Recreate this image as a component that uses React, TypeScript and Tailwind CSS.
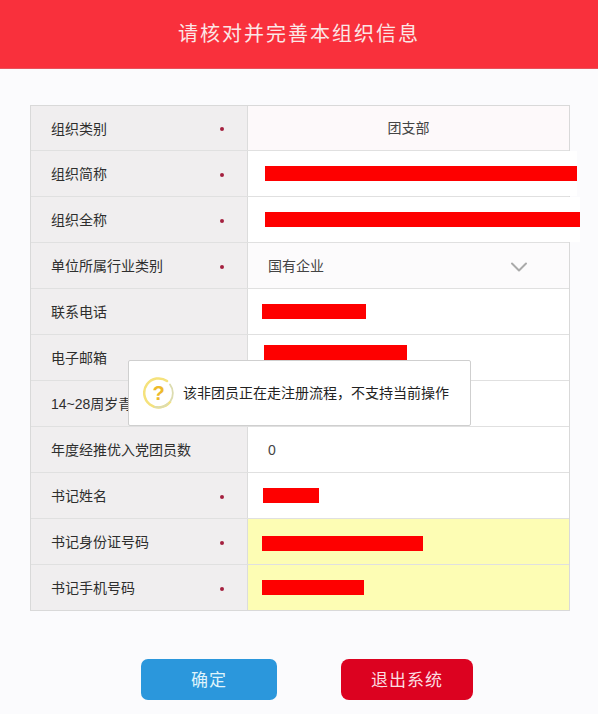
// Organisation info review form with a toast over it
import { ChevronDown } from 'lucide-react';

const FONT = '"Liberation Sans", "Noto Sans CJK SC", sans-serif';

interface Row {
  label: string;
  required?: boolean;
  tint?: 'pink' | 'soft' | 'yellow';
  bar?: { left: number; width: number; shift?: number };
  text?: string;
  select?: boolean;
  center?: boolean;
}

const rows: Row[] = [
  { label: '组织类别', required: true, tint: 'pink', text: '团支部', center: true },
  { label: '组织简称', required: true, bar: { left: 17, width: 312 } },
  { label: '组织全称', required: true, bar: { left: 17, width: 315 } },
  { label: '单位所属行业类别', required: true, tint: 'soft', text: '国有企业', select: true },
  { label: '联系电话', bar: { left: 14, width: 104 } },
  { label: '电子邮箱', bar: { left: 16, width: 143, shift: -10 } },
  { label: '14~28周岁青' },
  { label: '年度经推优入党团员数', text: '0' },
  { label: '书记姓名', required: true, bar: { left: 15, width: 56 } },
  { label: '书记身份证号码', required: true, tint: 'yellow', bar: { left: 14, width: 161, shift: 4 } },
  { label: '书记手机号码', required: true, tint: 'yellow', bar: { left: 14, width: 102, shift: -1 } },
];

function TableRow({ row, index }: { row: Row; index: number }) {
  const last = index === rows.length - 1;
  const tint =
    row.tint === 'yellow'
      ? 'bg-[#fdfdb4]'
      : row.tint === 'pink'
        ? 'bg-[#fdf9fa]'
        : row.tint === 'soft'
          ? 'bg-[#fcfbfc]'
          : 'bg-white';
  return (
    <div className={`flex ${index === 0 || last ? 'h-[45px]' : 'h-[46px]'} ${last ? '' : 'border-b border-[#e0e0e0]'}`}>
      <div className="flex w-[217px] shrink-0 items-center justify-between border-r border-[#dcdcdc] bg-[#f0eeef] pl-[20px] pr-[23px] pt-[2px] text-[14px] text-[#2e2e2e]">
        <span>{row.label}</span>
        {row.required && <span className="size-[4px] rounded-full bg-[#a4203f]" />}
      </div>
      <div className={`flex flex-1 items-center text-[14px] text-[#444] ${tint}`}>
        {row.bar && (
          <div
            className="h-[15px] shrink-0 bg-[#fe0000]"
            style={{ marginLeft: row.bar.left, width: row.bar.width, marginTop: row.bar.shift ?? 0 }}
          />
        )}
        {row.text && !row.bar && (
          <div
            className={
              row.center
                ? 'w-full pt-[1px] text-center'
                : 'flex w-full items-center justify-between pl-[20px] pr-[36px] pt-[2px]'
            }
          >
            <span>{row.text}</span>
            {row.select && (
              <ChevronDown size={28} strokeWidth={1.7} className="my-[-7px] text-[#aaaaaa]" />
            )}
          </div>
        )}
      </div>
    </div>
  );
}

function QuestionIcon() {
  return (
    <div className="relative h-[32px] w-[31px] shrink-0">
      <svg width="31" height="32" viewBox="0 0 31 32" fill="none">
        <path d="M24 4 A14.5 14.5 0 1 0 27 25" stroke="#f5e27c" strokeWidth="2.5" strokeLinecap="round" />
        <path d="M27 7.5 A14.5 14.5 0 0 1 27.5 24 M25 26.5 A14.5 14.5 0 0 1 12 30" stroke="#dcdcb0" strokeWidth="1.8" strokeLinecap="round" />
      </svg>
      <span className="absolute inset-0 flex items-center justify-center text-[20px] font-bold text-[#eeba2b]">?</span>
    </div>
  );
}

export default function App() {
  return (
    <div className="relative h-[714px] w-[598px] overflow-hidden bg-[#fbfbfd]" style={{ fontFamily: FONT }}>
      <div className="flex h-[69px] items-center justify-center border-b border-[#e8525c] bg-[#f9303c] pb-[1px] text-[20px] tracking-[2px] text-[#fbe6e6]">
        请核对并完善本组织信息
      </div>

      <div className="mx-[30px] mt-[36px] w-[540px] border border-[#d9d9d9]">
        {rows.map((row, i) => (
          <TableRow key={row.label} row={row} index={i} />
        ))}
      </div>

      <div className="mt-[48px] flex pl-[141px]">
        <button className="h-[41px] w-[136px] rounded-[7px] bg-[#2b97dc] pt-[2px] text-[17px] tracking-[1px] text-[#dff3fb]">
          确定
        </button>
        <button className="ml-[64px] h-[41px] w-[132px] rounded-[8px] bg-[#dc0220] pt-[2px] text-[17px] tracking-[1px] text-[#fbdde0]">
          退出系统
        </button>
      </div>

      {/* toast */}
      <div className="absolute left-[128px] top-[360px] flex h-[66px] w-[343px] items-center gap-[9px] rounded-[2px] border border-[#cfcfcf] bg-white pl-[14px] text-[14px] text-[#222]">
        <QuestionIcon />
        <span className="whitespace-nowrap">该非团员正在走注册流程，不支持当前操作</span>
      </div>
    </div>
  );
}
